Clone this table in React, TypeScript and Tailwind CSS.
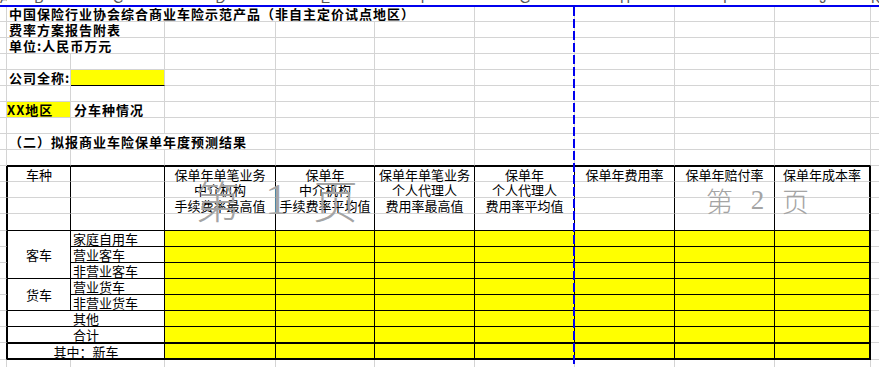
import type { ReactNode } from "react";

type Line = "g" | "k" | "k2" | "n";

const RB: Record<Line, string> = {
    g: "border-r border-r-[#d4d4d4]",
    k: "border-r border-r-black",
    k2: "border-r-2 border-r-black",
    n: "",
};
const BB: Record<Line, string> = {
    g: "border-b border-b-[#d4d4d4]",
    k: "border-b border-b-black",
    k2: "border-b-2 border-b-black",
    n: "",
};

const Cell = ({
    r = "g",
    b = "g",
    top = false,
    left = false,
    className = "",
    children,
}: {
    r?: Line;
    b?: Line;
    top?: boolean;
    left?: boolean;
    className?: string;
    children?: ReactNode;
}) => (
    <div
        className={`${RB[r]} ${BB[b]} ${top ? "border-t border-t-black" : ""} ${left ? "border-l border-l-black" : ""} ${className}`}
    >
        {children}
    </div>
);

const letters = ["A", "B", "C", "D", "E", "F", "G", "H", "I", "J", "K"];
const letterW = [
    "w-[7px]",
    "w-[64px]",
    "w-[94px]",
    "w-[111px]",
    "w-[99px]",
    "w-[100px]",
    "w-[100px]",
    "w-[100px]",
    "w-[100px]",
    "w-[96px]",
    "w-[8px]",
];

const head = [
    ["保单年单笔业务", "中介机构", "手续费率最高值"],
    ["保单年", "中介机构", "手续费率平均值"],
    ["保单年单笔业务", "个人代理人", "费用率最高值"],
    ["保单年", "个人代理人", "费用率平均值"],
    ["保单年费用率", "", ""],
    ["保单年赔付率", "", ""],
    ["保单年成本率", "", ""],
];

const bold = "flex items-center whitespace-nowrap font-bold text-[13px] tracking-[1px] leading-[14px]";
const txt = "flex items-center pt-px whitespace-nowrap text-[13px] leading-[14px]";

// plain gray cells for columns in [from, to)
const blanks = (row: number, from: number, to: number, b: Line = "g") =>
    Array.from({ length: to - from }, (_, i) => (
        <Cell key={`${row}-${from + i}`} r={from + i === 10 ? "n" : "g"} b={b} />
    ));

const yellowRow = (row: number, last = false) =>
    Array.from({ length: 7 }, (_, j) => (
        <Cell
            key={`${row}-y${j}`}
            r={j === 6 ? "k2" : "k"}
            b={last ? "k2" : "k"}
            top={last}
            className="bg-[#ffff00]"
        />
    ));

export default function App() {
    const kinds = [
        { label: "家庭自用车", group: "客车", span: "row-span-3" },
        { label: "营业客车" },
        { label: "非营业客车" },
        { label: "营业货车", group: "货车", span: "row-span-2" },
        { label: "非营业货车" },
    ];

    return (
        <div className="relative w-[879px] h-[367px] overflow-hidden bg-white text-black font-['Noto_Sans_CJK_SC',sans-serif]">
            {/* column letters, mostly scrolled away */}
            <div className="flex h-[7px] overflow-hidden border-b-2 border-b-[#0000ee] font-['Liberation_Sans',sans-serif] text-[14px] text-[#555]">
                {letters.map((l, i) => (
                    <div key={l} className={`${letterW[i]} shrink-0 overflow-hidden text-center`}>
                        <span className="block leading-[14px] -mt-[9px]">{l}</span>
                    </div>
                ))}
            </div>

            <div className="grid grid-cols-[7px_64px_94px_111px_99px_100px_100px_100px_100px_96px_8px] grid-rows-[15px_repeat(12,16px)_17px_repeat(7,16px)_17px_8px]">
                {/* row 1 */}
                <Cell />
                <Cell className={`col-span-5 pl-[2px] ${bold}`}>
                    中国保险行业协会综合商业车险示范产品（非自主定价试点地区）
                </Cell>
                {blanks(1, 6, 11)}

                {/* row 2 */}
                <Cell />
                <Cell className={`col-span-2 pl-[2px] ${bold}`}>费率方案报告附表</Cell>
                {blanks(2, 3, 11)}

                {/* row 3 */}
                <Cell />
                <Cell className={`col-span-2 pl-[2px] ${bold}`}>单位:人民币万元</Cell>
                {blanks(3, 3, 11)}

                {blanks(4, 0, 11)}

                {/* row 5 */}
                <Cell />
                <Cell className={`pl-[2px] ${bold}`}>公司全称:</Cell>
                <Cell b="k" className="bg-[#ffff00]" />
                {blanks(5, 3, 11)}

                {blanks(6, 0, 11)}

                {/* row 7 */}
                <Cell />
                <Cell className={`bg-[#ffff00] ${bold}`}>XX地区</Cell>
                <Cell className={`pl-[3px] ${bold}`}>分车种情况</Cell>
                {blanks(7, 3, 11)}

                {blanks(8, 0, 11)}

                {/* row 9 */}
                <Cell />
                <Cell className={`col-span-3 pl-[2px] ${bold}`}>（二）拟报商业车险保单年度预测结果</Cell>
                {blanks(9, 4, 11)}

                {/* row 10 */}
                <Cell />
                {Array.from({ length: 9 }, (_, i) => (
                    <Cell key={`10-${i}`} b="k" />
                ))}
                <Cell r="n" />

                {/* header rows 11-14 */}
                {[0, 1, 2, 3].map((i) => {
                    const b: Line = i === 3 ? "k" : "g";
                    return [
                        <Cell key={`h${i}-a`} r="k" />,
                        <Cell
                            key={`h${i}-b`}
                            r="k"
                            b={b}
                            top={i === 0}
                            left
                            className={`justify-center ${txt}`}
                        >
                            {i === 0 ? "车种" : ""}
                        </Cell>,
                        <Cell key={`h${i}-c`} r="k" b={b} top={i === 0} />,
                        ...head.map((h, j) => (
                            <Cell
                                key={`h${i}-${j}`}
                                r={j === 6 ? "k2" : "k"}
                                b={b}
                                top={i === 0}
                                className={`justify-center ${txt}`}
                            >
                                {h[i] ?? ""}
                            </Cell>
                        )),
                        <Cell key={`h${i}-k`} r="n" />,
                    ];
                })}

                {/* rows 15-19 */}
                {kinds.map((k, i) => [
                    <Cell key={`d${i}-a`} r="k" />,
                    k.group ? (
                        <Cell
                            key={`d${i}-b`}
                            r="k"
                            b="k"
                            left
                            className={`${k.span} justify-center ${txt}`}
                        >
                            {k.group}
                        </Cell>
                    ) : null,
                    <Cell key={`d${i}-c`} r="k" b="k" className={`pl-[2px] ${txt}`}>
                        {k.label}
                    </Cell>,
                    ...yellowRow(15 + i),
                    <Cell key={`d${i}-k`} r="n" />,
                ])}

                {/* rows 20-22 */}
                {["其他", "合计", "其中：新车"].map((t, i) => [
                    <Cell key={`s${i}-a`} r="k" />,
                    <Cell
                        key={`s${i}-b`}
                        r="k"
                        b={i === 2 ? "k2" : "k"}
                        top={i === 2}
                        left
                        className={`col-span-2 justify-center ${txt}`}
                    >
                        {t}
                    </Cell>,
                    ...yellowRow(20 + i, i === 2),
                    <Cell key={`s${i}-k`} r="n" />,
                ])}

                {blanks(23, 0, 11)}
            </div>

            {/* page break line */}
            <div className="absolute left-[573px] top-[7px] bottom-0 w-[2px] bg-[repeating-linear-gradient(to_bottom,#0000ee_0px,#0000ee_9px,transparent_9px,transparent_12px)]" />

            {/* page watermarks */}
            <div className="pointer-events-none absolute left-[195px] top-[177px] flex text-[45px] leading-[45px] font-light text-[#a4a4a4]">
                <span className="w-[45px]">第</span>
                <span className="w-[73px] text-center font-['Liberation_Serif',serif]">1</span>
                <span className="w-[45px]">页</span>
            </div>
            <div className="pointer-events-none absolute left-[706px] top-[187px] flex text-[27px] leading-[27px] font-light text-[#a4a4a4]">
                <span className="w-[27px]">第</span>
                <span className="w-[49px] text-center font-['Liberation_Serif',serif]">2</span>
                <span className="w-[27px]">页</span>
            </div>
        </div>
    );
}
